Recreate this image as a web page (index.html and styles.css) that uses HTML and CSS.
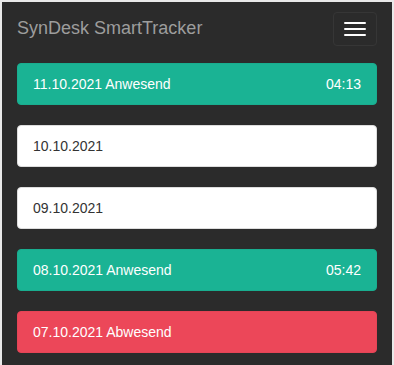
FILE: index.html
```html
<!DOCTYPE html>
<html lang="de">
<head>
<meta charset="utf-8">
<title>SynDesk SmartTracker</title>
<link rel="stylesheet" href="styles.css">
</head>
<body>
<div class="app">
  <header class="navbar">
    <span class="brand">SynDesk SmartTracker</span>
    <button class="toggle" aria-label="Menü">
      <span class="bar"></span>
      <span class="bar"></span>
      <span class="bar"></span>
    </button>
  </header>
  <main class="list">
    <div class="day present"><span>11.10.2021 Anwesend</span><span>04:13</span></div>
    <div class="day empty"><span>10.10.2021</span></div>
    <div class="day empty"><span>09.10.2021</span></div>
    <div class="day present"><span>08.10.2021 Anwesend</span><span>05:42</span></div>
    <div class="day absent"><span>07.10.2021 Abwesend</span></div>
  </main>
</div>
</body>
</html>
```
FILE: styles.css
```css
html, body {
  margin: 0;
  padding: 0;
  height: 100%;
  background: #e9e9e9;
  font-family: "Liberation Sans", Arial, sans-serif;
  overflow: hidden;
}
.app {
  margin: 2px 2px 0 2px;
  background: #2b2b2b;
  height: calc(100vh - 2px);
  box-sizing: border-box;
  padding: 0 15px;
}
.navbar {
  height: 52px;
  display: flex;
  align-items: center;
  justify-content: space-between;
}
.brand {
  color: #9d9d9d;
  font-size: 18px;
  line-height: 20px;
}
.toggle {
  width: 44px;
  height: 34px;
  box-sizing: border-box;
  padding: 9px 10px;
  border: 1px solid #363636;
  border-radius: 4px;
  background: transparent;
  display: flex;
  flex-direction: column;
  gap: 4px;
  margin-top: 2px;
}
.bar {
  display: block;
  width: 22px;
  height: 2px;
  background: #fff;
  border-radius: 1px;
}
.list {
  padding-top: 9px;
  display: flex;
  flex-direction: column;
  gap: 20px;
}
.day {
  height: 42px;
  box-sizing: border-box;
  border-radius: 4px;
  border: 1px solid transparent;
  padding: 0 15px;
  display: flex;
  align-items: center;
  justify-content: space-between;
  font-size: 14px;
}
.present {
  background: #1ab394;
  border-color: #19ad8f;
  color: #fff;
}
.empty {
  background: #fff;
  border-color: #dddddd;
  color: #333;
}
.absent {
  background: #ec4759;
  border-color: #e64456;
  color: #fff;
}
```
